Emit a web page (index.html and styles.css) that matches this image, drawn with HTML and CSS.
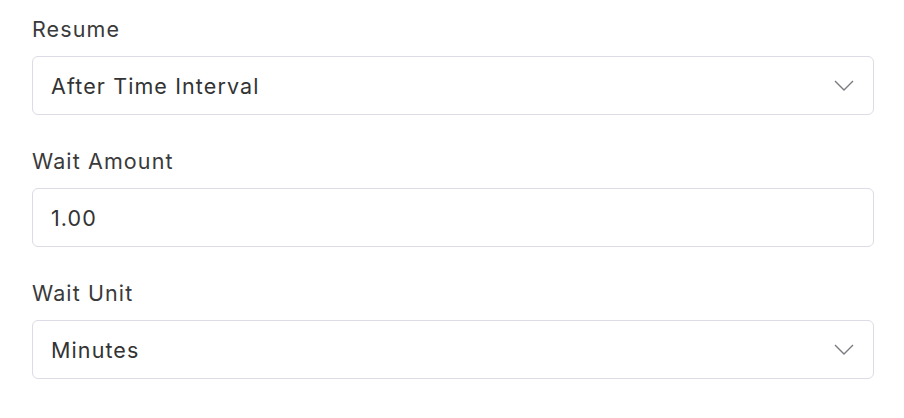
FILE: index.html
```html
<!DOCTYPE html>
<html lang="en">
<head>
    <meta charset="UTF-8">
    <title>Wait Settings</title>
    <link rel="stylesheet" href="styles.css">
</head>
<body>
    <div class="form">
        <div class="field">
            <label class="field-label">Resume</label>
            <div class="control select">
                <span>After Time Interval</span>
                <svg class="chevron" width="20" height="11" viewBox="0 0 20 11"><path d="M1 1l9 9 9-9" fill="none" stroke="#7a7a80" stroke-width="1.4"/></svg>
            </div>
        </div>
        <div class="field">
            <label class="field-label">Wait Amount</label>
            <div class="control">
                <span>1.00</span>
            </div>
        </div>
        <div class="field">
            <label class="field-label">Wait Unit</label>
            <div class="control select">
                <span>Minutes</span>
                <svg class="chevron" width="20" height="11" viewBox="0 0 20 11"><path d="M1 1l9 9 9-9" fill="none" stroke="#7a7a80" stroke-width="1.4"/></svg>
            </div>
        </div>
    </div>
</body>
</html>
```

FILE: styles.css
```css
body {
    margin: 0;
    font-family: Inter, "Noto Sans", sans-serif;
    color: #333;
    background: #fff;
}
.form {
    display: flex;
    flex-direction: column;
    gap: 33px;
    padding: 16px 30px 0 32px;
}
.field {
    display: flex;
    flex-direction: column;
    gap: 14px;
}
.field-label {
    font-size: 21.5px;
    line-height: 26px;
    letter-spacing: 1.1px;
    color: #3a3a3a;
}
.control {
    display: flex;
    align-items: center;
    justify-content: space-between;
    height: 57px;
    padding: 0 19px 0 18px;
    border: 1px solid #dcdbe6;
    border-radius: 6px;
    font-size: 21.5px;
    letter-spacing: 1.1px;
    color: #333;
}
.chevron {
    display: block;
}
```
